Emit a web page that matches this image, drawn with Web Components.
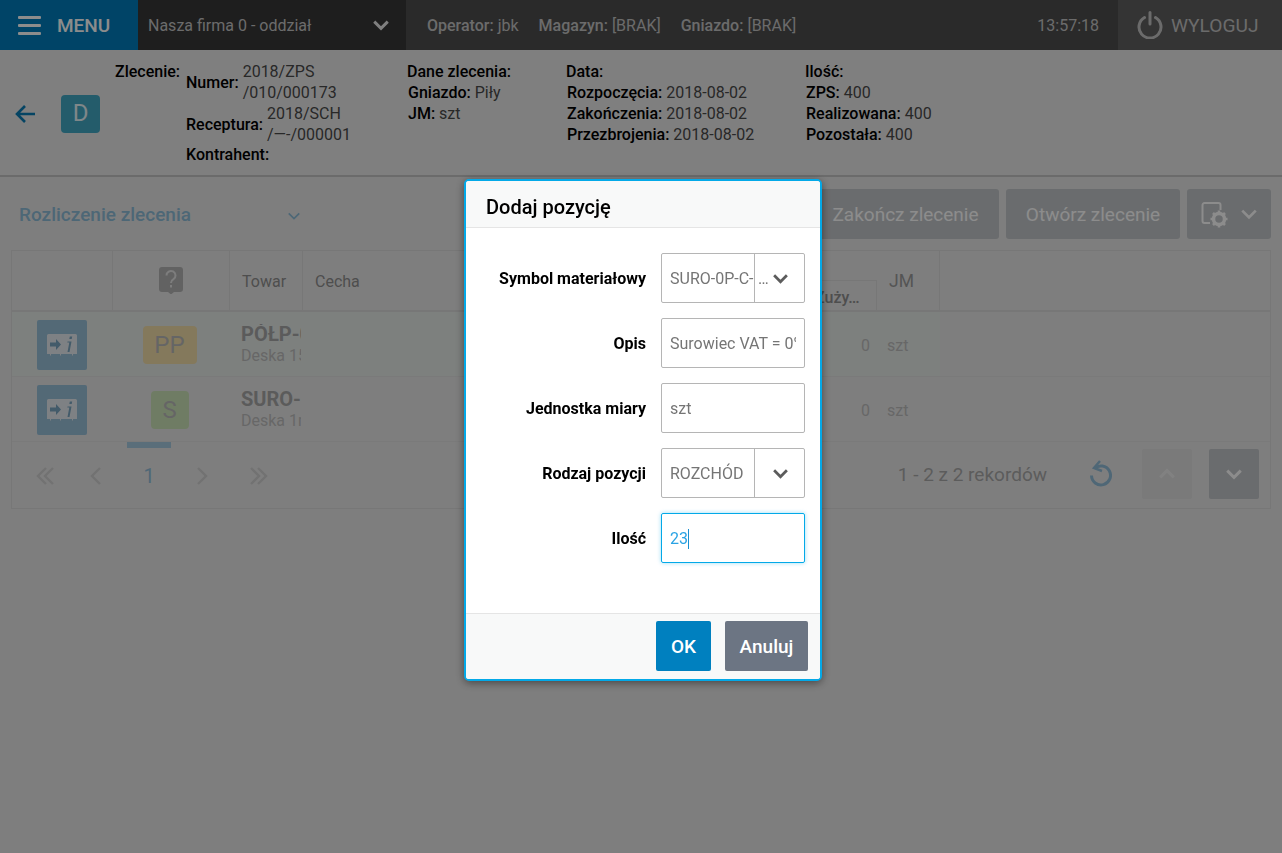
<!DOCTYPE html>
<html lang="pl">
<head>
<meta charset="utf-8">
<title>Dodaj pozycję</title>
<style>
html,body { margin:0; height:100%; }
body { font:16px/21px Roboto,"Liberation Sans",sans-serif; background:#e6e6e6; color:#000; overflow:hidden; }
</style>
</head>
<body>
<app-shell>
    <top-bar></top-bar>
    <order-header>
        <info-col style="width:292px">
            <div style="display:flex;gap:6px">
                <b style="font-weight:500">Zlecenie:</b>
                <div>
                    <kv-line label="Numer:">2018/ZPS<br>/010/000173</kv-line>
                    <kv-line label="Receptura:">2018/SCH<br>/—-/000001</kv-line>
                    <kv-line label="Kontrahent:" style="margin-top:-1px"></kv-line>
                </div>
            </div>
        </info-col>
        <info-col style="width:159px" title="Dane zlecenia:">
            <kv-line label="Gniazdo:">Piły</kv-line>
            <kv-line label="JM:">szt</kv-line>
        </info-col>
        <info-col style="width:239px" title="Data:">
            <kv-line label="Rozpoczęcia:">2018-08-02</kv-line>
            <kv-line label="Zakończenia:">2018-08-02</kv-line>
            <kv-line label="Przezbrojenia:">2018-08-02</kv-line>
        </info-col>
        <info-col title="Ilość:">
            <kv-line label="ZPS:">400</kv-line>
            <kv-line label="Realizowana:">400</kv-line>
            <kv-line label="Pozostała:">400</kv-line>
        </info-col>
    </order-header>
    <settle-panel></settle-panel>
</app-shell>
<modal-backdrop></modal-backdrop>
<modal-dialog heading="Dodaj pozycję">
    <form-field label="Symbol materiałowy" kind="select" ellipsis>SURO-0P-C-</form-field>
    <form-field label="Opis">Surowiec VAT = 0%</form-field>
    <form-field label="Jednostka miary">szt</form-field>
    <form-field label="Rodzaj pozycji" kind="select">ROZCHÓD</form-field>
    <form-field label="Ilość" kind="focus">23</form-field>
</modal-dialog>

<script>
const chevron = (w, color, sw = 2.4) => `<svg width="${w}" height="${w}" viewBox="0 0 16 16" fill="none" stroke="${color}" stroke-width="${sw}"><path d="M2 5l6 6 6-6"/></svg>`;

class base extends HTMLElement {
    constructor() {
        super();
        this.attachShadow({mode: 'open'}).innerHTML = this.markup();
    }
    attr(name, def = '') {
        return this.getAttribute(name) ?? def;
    }
}

class appShell extends base {
    markup() { return `<style>:host { display:flex; flex-direction:column; height:100vh; }</style><slot></slot>`; }
}

class topBar extends base {
    markup() {
        return `<style>
        :host { display:flex; align-items:center; height:50px; background:#4e4e4e; color:#c4c4c4; flex:none; }
        .menu { display:flex; align-items:center; gap:16px; width:138px; height:100%; box-sizing:border-box; padding-left:18px; background:#007dbc; color:#fff; font-size:19px; font-weight:500; }
        .menu i { display:block; width:23px; height:3px; background:#fff; box-shadow:0 -8px #fff, 0 8px #fff; border-radius:1px; }
        .firm { display:flex; align-items:center; justify-content:space-between; width:268px; height:100%; box-sizing:border-box; padding:0 16px 0 10px; background:#373737; }
        .info { display:flex; gap:20px; flex:1; padding-left:21px; }
        b { font-weight:500; }
        .clock { margin-right:19px; }
        .out { display:flex; align-items:center; gap:8px; width:164px; height:100%; box-sizing:border-box; padding-left:19px; background:#5f5f5f; font-size:19.2px; }
        </style>
        <div class=menu><i></i><span>MENU</span></div>
        <div class=firm><span>Nasza firma 0 - oddział</span>${chevron(18, '#e8e8e8', 2.6)}</div>
        <div class=info>
            <span><b>Operator:</b> jbk</span>
            <span><b>Magazyn:</b> [BRAK]</span>
            <span><b>Gniazdo:</b> [BRAK]</span>
        </div>
        <span class=clock>13:57:18</span>
        <div class=out>
            <svg width="26" height="28" viewBox="0 0 26 28" fill="none" stroke="#c4c4c4" stroke-width="3" stroke-linecap="round"><path d="M7.500 6.500a11 11 0 1 0 11 0M13 1.500V13"/></svg>
            <span>WYLOGUJ</span>
        </div>`;
    }
}

class orderHeader extends base {
    markup() {
        return `<style>
        :host { display:flex; flex:none; height:127px; box-sizing:border-box; padding-top:11px; border-bottom:2px solid #c4c4c4; background:#e8e8e8; }
        .lead { display:flex; align-items:center; width:115px; height:105px; flex:none; box-sizing:border-box; padding-left:14px; gap:25px; }
        .badge { display:flex; align-items:center; justify-content:center; width:39px; height:38px; border-radius:4px; background:#43a8c4; color:#e8f6fa; font-size:24px; }
        </style>
        <div class=lead>
            <svg width="22" height="20" viewBox="0 0 22 20" fill="none" stroke="#0a7cb5" stroke-width="2.6"><path d="M21 10H3M11 2l-8 8 8 8"/></svg>
            <div class=badge>D</div>
        </div>
        <slot></slot>`;
    }
}

class infoCol extends base {
    markup() {
        const title = this.attr('title');
        return `<style>
        :host { display:block; flex:none; }
        b { display:block; font-weight:500; margin-left:0; }
        ::slotted(kv-line) { margin-left:1px; }
        </style>
        ${title ? `<b>${title}</b>` : ''}<slot></slot>`;
    }
}

class kvLine extends base {
    markup() {
        return `<style>
        :host { display:flex; align-items:center; gap:4px; }
        b { font-weight:500; white-space:nowrap; }
        span { color:#4a4a4a; white-space:nowrap; }
        </style>
        <b>${this.attr('label')}</b><span><slot></slot></span>`;
    }
}

class settlePanel extends base {
    markup() {
        return `<style>
        :host { display:block; margin:0 11px; }
        .tools { display:flex; align-items:center; height:73px; box-sizing:border-box; padding:1px 0 0 8px; gap:7px; }
        .title { display:flex; align-items:center; justify-content:space-between; width:282px; margin-right:auto; color:#8dbcd8; font-size:19px; font-weight:500; }
        .title svg { margin-top:3px; }
        .btn { display:flex; align-items:center; justify-content:center; height:50px; border-radius:3px; background:#c2c5c9; color:#fff; font-size:19px; box-sizing:border-box; }
        </style>
        <div class=tools>
            <div class=title>Rozliczenie zlecenia ${chevron(14, '#8dbcd8', 2)}</div>
            <div class=btn style="width:187px">Zakończ zlecenie</div>
            <div class=btn style="width:174px">Otwórz zlecenie</div>
            <div class=btn style="width:84px;gap:12px">
                <svg width="28" height="28" viewBox="0 0 28 28" fill="none"><path d="M10 23H4.500a2 2 0 0 1-2-2V5a2 2 0 0 1 2-2h14a2 2 0 0 1 2 2v5" stroke="#fff" stroke-width="2"/><circle cx="19" cy="19" r="5.500" stroke="#fff" stroke-width="3.500"/><path d="M19 10.500v3M19 24.500v3M10.500 19h3M24.500 19h3M13 13l2 2M23 23l2 2M13 25l2-2M23 15l2-2" stroke="#fff" stroke-width="2.600"/></svg>
                ${chevron(18, '#fff', 2.4)}
            </div>
        </div>
        <data-grid></data-grid>
        <grid-pager></grid-pager>`;
    }
}

const ticket = `<svg width="30" height="22" viewBox="0 0 30 22"><path d="M1.500 0h27A1.500 1.500 0 0 1 30 1.500v18.500h-4v1.500h-1v-1.500H14v1.500h-1v-1.500H4v1.500H3v-1.500H0V1.500A1.500 1.500 0 0 1 1.500 0z" fill="#e6ecf0"/><path d="M3 8.500h6V5l5 5.500-5 5.500v-3.500H3z" fill="#7ba6c2"/><path d="M20.500 18l1.800-9.500h-2l.2-1h4l-2 10.500zM22.800 2.500h2.400l-.5 2.500h-2.400z" fill="#7ba6c2"/></svg>`;

class dataGrid extends base {
    markup() {
        const row = (bg, badge, w, name, sub) => `
            <div class="c ${bg}"><div class=ico>${ticket}</div></div>
            <div class="c ${bg}"><div class=tag style="width:${w}px;background:${badge==='PP'?'#f0dca8':'#cbe2b6'}">${badge}</div></div>
            <div class="c txt ${bg}"><div class=clip><strong>${name}</strong><small>${sub}</small></div></div>
            <div class="c ${bg}"></div>
            <div class="c num ${bg}">0</div>
            <div class="c jm ${bg}">szt</div>
            <div class="c last"></div>`;
        return `<style>
        :host { display:grid; grid-template-columns:101px 117px 73px 512px 62px 63px 1fr; grid-template-rows:61px 65px 65px; border:1px solid #d9d9d9; border-width:1px 1px 0; color:#9a9a9a; }
        .h { display:flex; align-items:center; box-sizing:border-box; padding:2px 0 0 12px; border-right:1px solid #d9d9d9; border-bottom:2px solid #d9d9d9; color:#8e8e8e; }
        .h.mid { justify-content:center; padding:0; }
        .h.jm { padding-left:12px; font-size:17.500px; color:#9a9a9a; }
        .use { align-items:flex-end; border-right:0; padding:0; }
        .use span { display:block; width:100%; height:30px; border-top:1px solid #d9d9d9; border-right:1px solid #d9d9d9; box-sizing:border-box; padding-right:25px; line-height:33px; font-size:16px; font-weight:500; color:#8e8e8e; white-space:nowrap; }
        .h.end { border-right:0; }
        .c { display:flex; align-items:center; box-sizing:border-box; padding-top:2px; border-bottom:1px solid #dfdfdf; min-width:0; }
        .tint { background:#e4e9e6; }
        .ico { display:flex; align-items:center; justify-content:center; width:50px; height:50px; margin-left:25px; border-radius:2px; background:#98bfd8; }
        .tag { display:flex; align-items:center; justify-content:center; height:38px; margin:auto; border-radius:4px; color:#b9b9b9; font-size:24px; transform:translateX(-2px); }
        .txt { padding-left:11px; }
        .clip { width:60px; overflow:hidden; white-space:nowrap; }
        strong { display:block; font-size:20px; font-weight:700; line-height:21px; margin-bottom:1px; color:#a6a6a6; }
        small { display:block; font-size:16px; line-height:20px; color:#bcbcbc; }
        .num { justify-content:flex-end; padding-right:7px; color:#bcbcbc; }
        .jm { padding-left:10px; color:#bcbcbc; }
        </style>
        <div class="h"></div>
        <div class="h mid"><svg width="24" height="27" viewBox="0 0 24 27"><path d="M3 0h18a3 3 0 0 1 3 3v19a3 3 0 0 1-3 3h-6l-3 2.500-3-2.500H3a3 3 0 0 1-3-3V3a3 3 0 0 1 3-3z" fill="#b3b3b3"/><path d="M7.500 8.500a4.500 4.500 0 1 1 7 3.700c-1.600 1-2.500 1.800-2.500 3.800" fill="none" stroke="#e4e4e4" stroke-width="2"/><rect x="11" y="18" width="2" height="2.500" fill="#e4e4e4"/></svg></div>
        <div class="h">Towar</div>
        <div class="h">Cecha</div>
        <div class="h use"><span>Zuży…</span></div>
        <div class="h jm">JM</div>
        <div class="h end"></div>
        ${row('tint', 'PP', 54, 'PÓŁP-0P-C-001', 'Deska 15x100')}
        ${row('', 'S', 38, 'SURO-0P-C-001', 'Deska 1m')}`;
    }
}

class gridPager extends base {
    markup() {
        const arrow = (d, extra = '') => `<svg ${extra} width="24" height="24" viewBox="0 0 24 24" fill="none" stroke="#cfcfcf" stroke-width="2.400"><path d="${d}"/></svg>`;
        return `<style>
        :host { display:flex; align-items:center; height:67px; box-sizing:border-box; border:1px solid #d9d9d9; border-top:0; position:relative; color:#a8a8a8; }
        .pages { display:grid; grid-template-columns:repeat(5,52px); margin-left:7px; padding-top:2px; justify-items:center; align-items:center; }
        .pages .on { color:#90bcd8; font-size:20px; }
        .pages .bar { position:absolute; left:115px; top:0; width:44px; height:6px; background:#a4c8de; }
        .rec { margin:0 0 2px auto; font-size:19px; color:#a8a8a8; }
        .sq { display:flex; align-items:center; justify-content:center; width:50px; height:50px; margin-bottom:2px; border-radius:2px; background:#c2c5c9; }
        .up { background:#dedede; margin-right:17px; }
        .dn { margin-right:11px; }
        .re { margin:0 30px 4px 41px; display:flex; }
        </style>
        <div class=pages>
            <div class=bar></div>
            ${arrow('M13 4l-8 8 8 8M20 4l-8 8 8 8')}
            ${arrow('M15 4l-8 8 8 8')}
            <span class=on>1</span>
            ${arrow('M9 4l8 8-8 8')}
            ${arrow('M4 4l8 8-8 8M11 4l8 8-8 8', 'style="transform:translateX(6px)"')}
        </div>
        <span class=rec>1 - 2 z 2 rekordów</span>
        <div class=re><svg width="24" height="28" viewBox="0 0 24 28" fill="none" stroke="#90bcd8" stroke-width="3"><path d="M6.500 9.500a9.500 9.500 0 1 1-3 7"/><path d="M12 2L6 9l8 3" stroke-width="2.500"/></svg></div>
        <div class="sq up">${chevron(18, '#ececec', 2.600).replace('M2 5l6 6 6-6', 'M2 11l6-6 6 6')}</div>
        <div class="sq dn">${chevron(18, '#fff', 2.600)}</div>`;
    }
}

class modalBackdrop extends base {
    markup() {
        return `<style>:host { position:fixed; inset:0; background:rgba(0,0,0,.45); }</style>`;
    }
}

class modalDialog extends base {
    markup() {
        return `<style>
        :host { position:fixed; left:464px; top:179px; width:358px; height:502px; box-sizing:border-box; display:flex; flex-direction:column; border:2px solid #03a9e8; border-radius:5px; background:#fff; box-shadow:0 2px 8px rgba(0,0,0,.45); overflow:hidden; }
        h2 { margin:0; height:47px; flex:none; box-sizing:border-box; padding-left:20px; background:#f8f9f9; border-bottom:1px solid #e5e5e5; font-size:20px; line-height:53px; font-weight:500; }
        .body { flex:1; display:flex; flex-direction:column; gap:15px; padding-top:25px; }
        footer { display:flex; justify-content:flex-end; gap:14px; flex:none; height:66px; box-sizing:border-box; padding:7px 12px 0 0; background:#f8f9f9; border-top:1px solid #e5e5e5; }
        button { height:50px; border:0; border-radius:2px; color:#fff; font:500 19px Roboto,sans-serif; padding:0; }
        </style>
        <h2>${this.attr('heading')}</h2>
        <div class=body><slot></slot></div>
        <footer>
            <button style="width:55px;background:#0080bf">OK</button>
            <button style="width:83px;background:#6c7583">Anuluj</button>
        </footer>`;
    }
}

class formField extends base {
    markup() {
        const kind = this.attr('kind');
        const select = kind === 'select';
        const focus = kind === 'focus';
        return `<style>
        :host { display:flex; align-items:center; height:50px; color:#000; }
        label { width:180px; text-align:right; font-size:16px; font-weight:700; margin-right:15px; white-space:nowrap; }
        .box { display:flex; width:144px; height:50px; box-sizing:border-box; border:1px solid #b5b5b5; border-radius:2px; color:#757575; font-size:16px; }
        .box.focus { border-color:#03a9e8; box-shadow:0 0 4px rgba(3,169,232,.4); color:#2aa3e4; }
        .val { flex:1; min-width:0; overflow:hidden; white-space:nowrap; padding-left:8px; margin-right:8px; line-height:50px; height:48px; }
        .box.select .val { flex:none; width:84px; margin:0; box-sizing:content-box; }
        .caret { display:inline-block; width:1px; height:20px; background:#1a8fd0; vertical-align:-5px; }
        .arrow { flex:1; display:flex; align-items:center; justify-content:center; position:relative; border-left:1px solid #b5b5b5; padding-left:2px; }
        .dots { position:absolute; left:3px; top:0; line-height:50px; }
        </style>
        <label>${this.attr('label')}</label>
        <div class="box ${select ? 'select' : ''} ${focus ? 'focus' : ''}">
            <div class=val><slot></slot>${focus ? '<span class=caret></span>' : ''}</div>
            ${select ? `<div class=arrow>${this.hasAttribute('ellipsis') ? '<span class=dots>…</span>' : ''}${chevron(17, '#5c5c5c', 2.600)}</div>` : ''}
        </div>`;
    }
}

customElements.define('app-shell', appShell);
customElements.define('top-bar', topBar);
customElements.define('order-header', orderHeader);
customElements.define('info-col', infoCol);
customElements.define('kv-line', kvLine);
customElements.define('settle-panel', settlePanel);
customElements.define('data-grid', dataGrid);
customElements.define('grid-pager', gridPager);
customElements.define('modal-backdrop', modalBackdrop);
customElements.define('modal-dialog', modalDialog);
customElements.define('form-field', formField);
</script>
</body>
</html>
